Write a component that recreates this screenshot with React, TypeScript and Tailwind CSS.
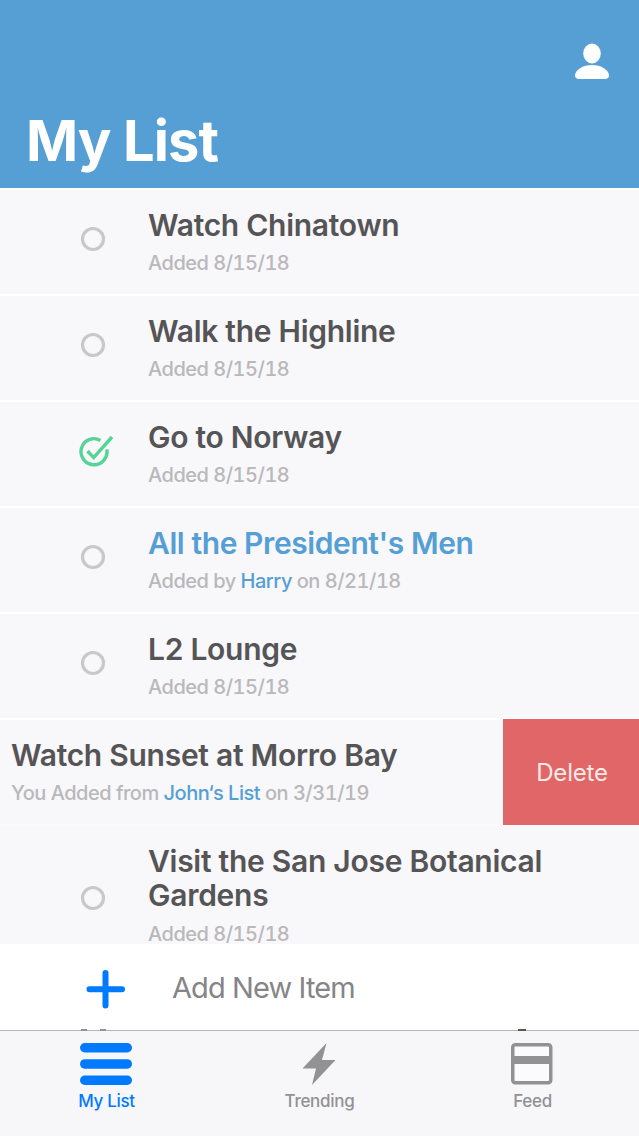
import type { ReactNode } from 'react'
import clsx from 'clsx'

interface ListItem {
  id: number
  title: string
  meta: ReactNode
  done?: boolean
  shared?: boolean
  swiped?: boolean
  tall?: boolean
}

const items: ListItem[] = [
  { id: 1, title: 'Watch Chinatown', meta: 'Added 8/15/18' },
  { id: 2, title: 'Walk the Highline', meta: 'Added 8/15/18' },
  { id: 3, title: 'Go to Norway', meta: 'Added 8/15/18', done: true },
  {
    id: 4,
    title: "All the President's Men",
    meta: (
      <>
        Added by <Mention>Harry</Mention> on 8/21/18
      </>
    ),
    shared: true,
  },
  { id: 5, title: 'L2 Lounge', meta: 'Added 8/15/18' },
  {
    id: 6,
    title: 'Watch Sunset at Morro Bay',
    meta: (
      <>
        You Added from <Mention>John‘s List</Mention> on 3/31/19
      </>
    ),
    swiped: true,
  },
  { id: 7, title: 'Visit the San Jose Botanical Gardens', meta: 'Added 8/15/18', tall: true },
]

function Mention({ children }: { children: ReactNode }) {
  return <span className="text-[#559fd4]">{children}</span>
}

function StatusIcon({ done }: { done?: boolean }) {
  if (done) {
    return (
      <svg width="36" height="36" viewBox="0 0 36 36" fill="none" stroke="#55d495" strokeWidth="3.4">
        <path d="M22.4 7.4A13 13 0 1 0 28.8 16.4" />
        <path d="M9.5 18L15.7 24.6L34 4" />
      </svg>
    )
  }
  return (
    <svg width="36" height="36" viewBox="0 0 36 36" fill="none" stroke="#c8c7ca" strokeWidth="3.2">
      <circle cx="15" cy="18" r="10.5" />
    </svg>
  )
}

function ListRow({ item }: { item: ListItem }) {
  return (
    <li className={clsx('flex border-t-2', item.tall ? 'border-[#fafafc]' : 'border-white')}>
      {!item.swiped && (
        <div
          className={clsx(
            'flex w-[148px] shrink-0 items-center pl-[78px]',
            item.tall ? 'pt-[5px]' : 'pb-1.5'
          )}
        >
          <StatusIcon done={item.done} />
        </div>
      )}
      <div className={clsx('min-w-0 flex-1 py-[18px]', item.swiped ? 'pl-[11px]' : 'pr-16')}>
        <h2
          className={clsx(
            'text-[30px] leading-[34px] font-semibold',
            item.shared ? 'tracking-[-0.41px] text-[#559fd4]' : 'tracking-[-0.27px] text-[#555456]'
          )}
        >
          {item.title}
        </h2>
        <p
          className={clsx(
            'text-[20px] leading-[26px] font-medium tracking-[-0.5px] text-[#b9b8ba] tabular-nums',
            item.tall ? 'mt-[9px]' : 'mt-2'
          )}
        >
          {item.meta}
        </p>
      </div>
      {item.swiped && (
        <button className="-mt-px -mb-px w-[136px] bg-[#e06668] pt-0.5 pl-0.5 text-2xl tracking-[-0.2px] text-[#fdeae4]">
          Delete
        </button>
      )}
    </li>
  )
}

function Tab({ label, active, children }: { label: string; active?: boolean; children: ReactNode }) {
  return (
    <button
      className={clsx(
        'flex flex-1 flex-col items-center pt-[11px] text-[17px] leading-[22px] font-medium tracking-[-0.3px]',
        active ? 'text-[#007aff]' : 'text-[#929194]'
      )}
    >
      <span className="flex h-11 items-center pr-0.5">{children}</span>
      <span className="mt-1">{label}</span>
    </button>
  )
}

export default function App() {
  return (
    <div className="flex h-[1136px] w-[639px] flex-col overflow-hidden bg-[#f8f7fa] font-['Inter',sans-serif]">
      <header className="flex h-[188px] shrink-0 justify-between bg-[#559fd5] pr-[30px] pl-[26px]">
        <h1 className="self-end pb-[13px] text-[56px] leading-[68px] font-bold tracking-[-0.9px] text-white">
          My List
        </h1>
        <svg className="mt-[43px]" width="34" height="37" viewBox="0 0 34 37" fill="#fff">
          <ellipse cx="17" cy="10.5" rx="8.8" ry="10" />
          <path d="M0 32.5C0 27 8 22 17 22S34 27 34 32.5C34 34.7 32.5 36 30 36H4C1.5 36 0 34.7 0 32.5Z" />
        </svg>
      </header>

      <ul className="h-[756px] shrink-0 overflow-hidden">
        {items.map((item) => (
          <ListRow key={item.id} item={item} />
        ))}
      </ul>

      <div className="relative flex h-[86px] shrink-0 items-center bg-white pl-[86px]">
        <svg className="mt-1" width="40" height="40" viewBox="0 0 40 40" stroke="#007aff" strokeWidth="6" strokeLinecap="round">
          <path d="M19.5 4V36.5M3.5 20.3H36" />
        </svg>
        <span className="pt-0.5 pl-[46px] text-[29px] tracking-[-0.9px] text-[#858487]">Add New Item</span>
        {/* tops of the row scrolled under the bar */}
        <span className="absolute -bottom-px left-[81px] h-0.5 w-1.5 bg-[#929194]" />
        <span className="absolute -bottom-px left-[100px] h-0.5 w-1.5 bg-[#929194]" />
        <span className="absolute -bottom-px left-[518px] h-0.5 w-2 bg-[#555456]" />
      </div>

      <nav className="flex h-[106px] shrink-0 border-t border-[#b5b4b7] bg-[#f7f6f9]">
        <Tab label="My List" active>
          <svg width="52" height="42" viewBox="0 0 52 42" fill="currentColor">
            <rect width="52" height="9.5" rx="4.75" />
            <rect y="16.2" width="52" height="9.5" rx="4.75" />
            <rect y="32.5" width="52" height="9.5" rx="4.75" />
          </svg>
        </Tab>
        <Tab label="Trending">
          <svg width="34" height="42" viewBox="0 0 34 42" fill="currentColor">
            <path d="M24.5 0L0.5 25.5H14L10 42L33.5 17H20Z" />
          </svg>
        </Tab>
        <Tab label="Feed">
          <svg width="42" height="42" viewBox="0 0 42 42" fill="#fbfbfd" stroke="currentColor">
            <rect x="1.75" y="1.75" width="38" height="38" rx="2.5" strokeWidth="3.5" />
            <path d="M2 17H40" strokeWidth="8" />
          </svg>
        </Tab>
      </nav>
    </div>
  )
}
